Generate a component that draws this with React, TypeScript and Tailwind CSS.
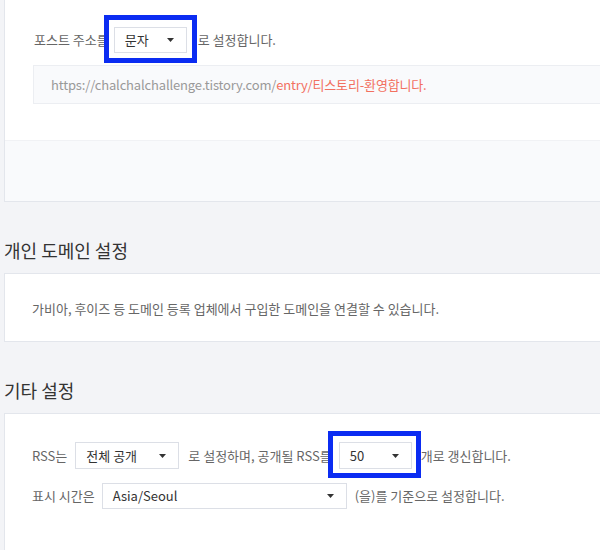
import React from 'react';

const Caret = () => (
  <svg width="7" height="4" viewBox="0 0 7 4" className="shrink-0">
    <polygon points="0,0 7,0 3.5,4" fill="#333" />
  </svg>
);

type SelectProps = {
  value: string;
  width: string;
  height?: string;
  highlight?: 'a' | 'b';
};

const Select = ({ value, width, height = 'h-[26px]', highlight }: SelectProps) => (
  <div className={`relative ${width} ${height} shrink-0`}>
    <div className="flex h-full items-center justify-between border border-[#dcdfe6] bg-white pl-[10px] pr-[12px] text-[13px] text-[#333]">
      <span>{value}</span>
      <Caret />
    </div>
    {/* annotation box drawn over the screenshot */}
    {highlight === 'a' && (
      <span className="pointer-events-none absolute -left-[10px] -top-[12px] -right-[10px] -bottom-[10px] border-[5px] border-[#0b2cf2]" />
    )}
    {highlight === 'b' && (
      <span className="pointer-events-none absolute -left-[11px] -top-[11px] -right-[9px] -bottom-[9px] border-[5px] border-[#0b2cf2]" />
    )}
  </div>
);

export default function App() {
  return (
    <div
      className="min-h-[550px] overflow-hidden bg-[#f3f4f7] pl-[4px] text-[13px] text-[#666]"
      style={{ fontFamily: '"Noto Sans CJK KR", "Noto Sans", sans-serif' }}
    >
      {/* 포스트 주소 card */}
      <div className="border-b border-l border-[#e3e6ec] bg-white">
        <div className="pb-[36px] pl-[28px] pt-[27px]">
          <div className="flex h-[26px] items-center">
            <span className="pl-[1px]">포스트 주소를</span>
            <div className="ml-[5px]">
              <Select value="문자" width="w-[73px]" highlight="a" />
            </div>
            <span className="ml-[11px]">로 설정합니다.</span>
          </div>
          <div className="mt-[12px] flex h-[39px] items-center border border-r-0 border-[#eceef2] bg-[#f9fafc] pl-[17px] tracking-[-0.15px] text-[#999]">
            https://chalchalchallenge.tistory.com/
            <span className="text-[#f2705f]">entry/티스토리-환영합니다.</span>
          </div>
        </div>
        <div className="h-[61px] border-t border-[#f1f2f5] bg-[#f9fafc]" />
      </div>

      {/* 개인 도메인 설정 */}
      <h2 className="mb-[11px] mt-[36px] text-[18px] font-normal leading-[24px] text-[#333]">
        개인 도메인 설정
      </h2>
      <div className="border-y border-l border-[#e3e6ec] bg-white pb-[24px] pl-[27px] pt-[26px] leading-[17px]">
        가비아, 후이즈 등 도메인 등록 업체에서 구입한 도메인을 연결할 수 있습니다.
      </div>

      {/* 기타 설정 */}
      <h2 className="mb-[11px] mt-[36px] text-[18px] font-normal leading-[24px] text-[#333]">
        기타 설정
      </h2>
      <div className="h-[200px] border-l border-t border-[#e3e6ec] bg-white pl-[27px] pt-[28px]">
        <div className="flex h-[27px] items-center">
          <span>RSS는</span>
          <div className="ml-[8px]">
            <Select value="전체 공개" width="w-[104px]" height="h-[27px]" />
          </div>
          <span className="ml-[9px]">로 설정하며, 공개될 RSS를</span>
          <div className="ml-[7px]">
            <Select value="50" width="w-[73px]" height="h-[27px]" highlight="b" />
          </div>
          <span className="ml-[9px]">개로 갱신합니다.</span>
        </div>
        <div className="mt-[14px] flex h-[26px] items-center">
          <span>표시 시간은</span>
          <div className="ml-[7px]">
            <Select value="Asia/Seoul" width="w-[245px]" />
          </div>
          <span className="ml-[8px]">(을)를 기준으로 설정합니다.</span>
        </div>
      </div>
    </div>
  );
}
